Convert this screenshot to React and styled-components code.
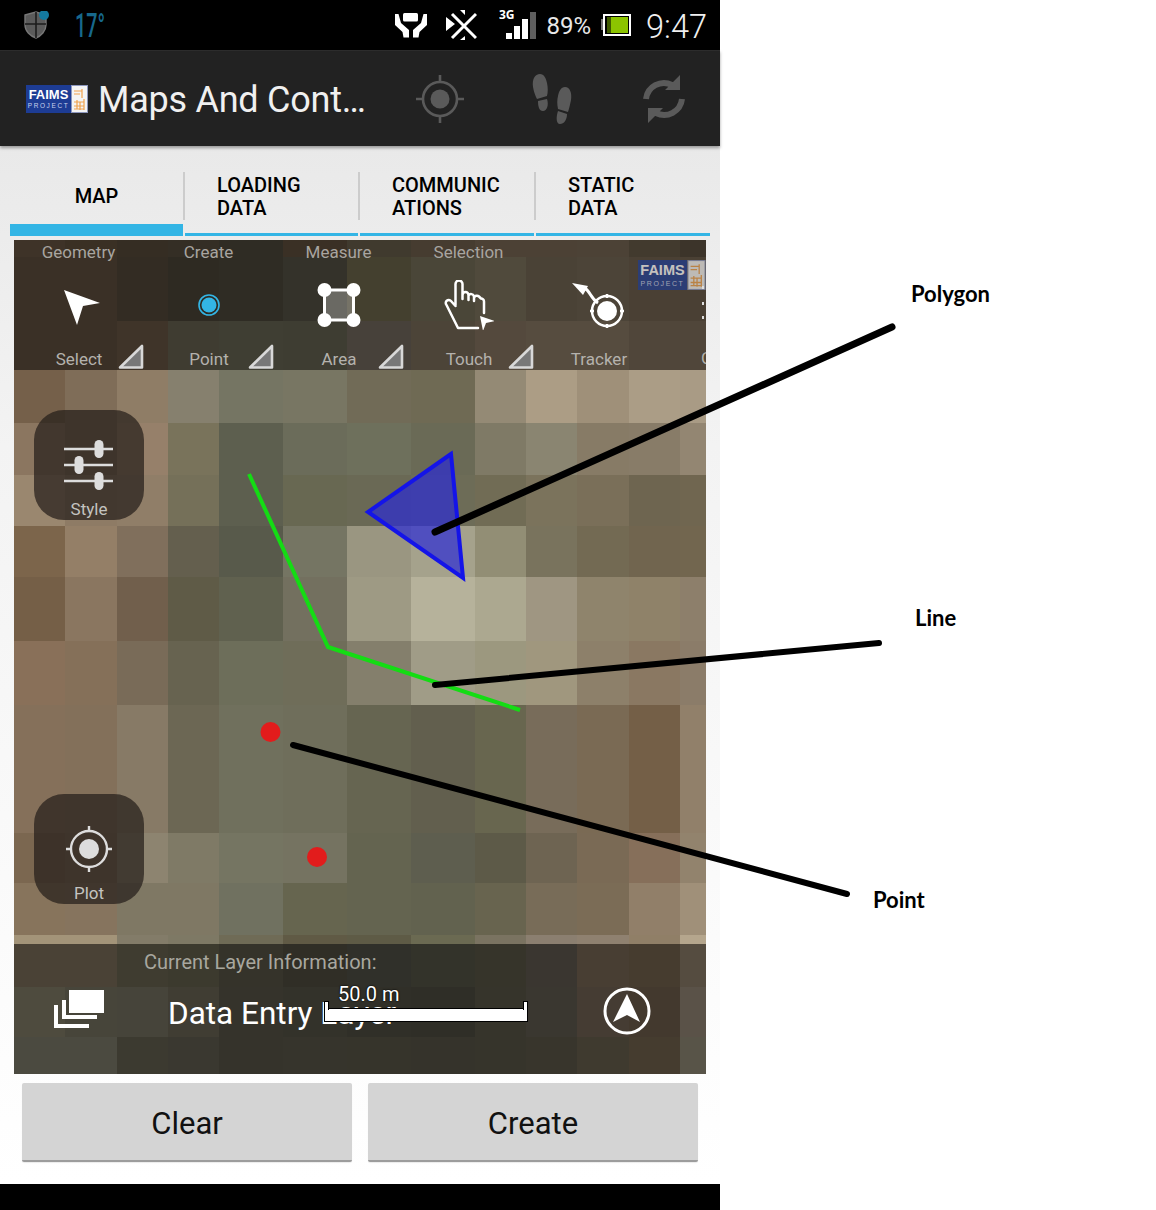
import React from 'react';
import styled, { createGlobalStyle } from 'styled-components';

const Global = createGlobalStyle`
  html, body { margin: 0; padding: 0; background: #fff; }
  #root { width: 1156px; height: 1210px; }
`;

const Page = styled.div`
  position: relative;
  width: 1156px;
  height: 1210px;
  overflow: hidden;
  background: #fff;
  font-family: Roboto, "Liberation Sans", sans-serif;
`;
const Phone = styled.div`
  width: 720px;
  height: 1210px;
  display: flex;
  flex-direction: column;
`;
const StatusBar = styled.div`
  height: 50px;
  flex: none;
  background: #000;
  display: flex;
  align-items: center;
  padding: 0 13px 0 22px;
`;
const Temp = styled.span`
  margin-left: 25px;
  width: 28px;
  font: 500 34px Roboto, sans-serif;
  color: #17688c;
  transform: scaleX(0.58);
  transform-origin: left center;
  white-space: nowrap;
`;
const StatusRight = styled.div`
  margin-left: auto;
  display: flex;
  align-items: center;
`;
const Percent = styled.span`
  font: 400 24px Roboto, sans-serif;
  color: #e8e8e8;
  margin: 2px 10px 0 10px;
`;
const Clock = styled.span`
  font: 300 32.5px Roboto, sans-serif;
  color: #f0f0f0;
  margin: 3px 0 0 14px;
`;
const NetLabel = styled.text`
  font: 700 12px "Open Sans", sans-serif;
  fill: #fff;
`;
const ActionBar = styled.div`
  height: 96px;
  flex: none;
  box-sizing: border-box;
  background: #222;
  border-top: 1px solid #2c2c2c;
  display: flex;
  align-items: center;
  padding-left: 26px;
  box-shadow: 0 2px 3px rgba(0, 0, 0, 0.35);
  position: relative;
  z-index: 1;
`;
const Logo = styled.div`
  display: flex;
  flex: none;
  width: ${p => p.$w}px;
  height: ${p => p.$h}px;
  opacity: ${p => p.$dim ? 0.68 : 1};
`;
const LogoBlue = styled.div`
  flex: 1;
  background: #1d3c94;
  color: #fff;
  display: flex;
  flex-direction: column;
  align-items: center;
  justify-content: center;
  font-weight: 700;
  font-size: ${p => p.$size}px;
  line-height: 1;
  font-family: "Liberation Sans", sans-serif;
`;
const LogoSub = styled.span`
  font-weight: 400;
  font-size: ${p => p.$size}px;
  letter-spacing: 1.6px;
  color: #c8d2ec;
  margin-top: 2px;
`;
const LogoSide = styled.svg`
  flex: none;
  display: block;
`;
const Title = styled.div`
  margin: 2px 0 0 10px;
  width: 316px;
  font-size: 36px;
  letter-spacing: -0.25px;
  color: #f0f0f0;
  white-space: nowrap;
`;
const ActionIcons = styled.div`
  display: flex;
  align-items: center;
`;
const Content = styled.div`
  flex: 1;
  display: flex;
  flex-direction: column;
  background: linear-gradient(#e9e9e9 0, #ececec 90px, #f3f3f3 300px, #ffffff 100%);
`;
const Tabs = styled.div`
  height: 90px;
  flex: none;
  padding: 0 10px;
  display: grid;
  grid-template-columns: 173px 173px 174px 174px;
  column-gap: 2px;
`;
const Tab = styled.div`
  position: relative;
  display: flex;
  align-items: center;
  justify-content: ${p => p.$active ? 'center' : 'flex-start'};
  height: 90px;
  box-sizing: border-box;
  padding-left: ${p => p.$active ? '0' : '32px'};
  padding-top: ${p => p.$active ? '22px' : '17px'};
  padding-bottom: ${p => p.$active ? '0' : '3px'};
  border-bottom: ${p => p.$active ? '12px' : '3px'} solid #33b5e5;
  font-size: 20px;
  font-weight: 500;
  line-height: 23px;
  color: #000;
  &::after {
    content: '';
    display: ${p => p.$last ? 'none' : 'block'};
    position: absolute;
    right: -2px;
    top: 26px;
    height: 48px;
    width: 2px;
    background: #ccc;
  }
`;
const Map = styled.div`
  position: relative;
  width: 692px;
  height: 834px;
  margin: 4px 0 0 14px;
  flex: none;
  display: flex;
  flex-direction: column;
  overflow: hidden;
`;
const Mosaic = styled.div`
  position: absolute;
  inset: 0;
  display: grid;
  grid-template-columns: 51px 52px 51px 51px 64px 64px 64px 64px 51px 51px 52px 51px 26px;
  grid-template-rows: 17px 64px 49px 53px 52px 51px 51px 64px 64px 128px 50px 52px 9px 43px 50px 37px;
`;
const Cell = styled.div`
  background: ${p => p.$c};
`;
const Drawing = styled.svg`
  position: absolute;
  inset: 0;
`;
const TopPanel = styled.div`
  position: relative;
  height: 130px;
  flex: none;
  display: grid;
  grid-template-columns: repeat(5, 130px);
  color: #a8a5a0;
`;
const Tool = styled.div`
  position: relative;
  display: flex;
  flex-direction: column;
  align-items: center;
`;
const ToolHead = styled.div`
  height: 24px;
  line-height: 25px;
  margin-left: -1px;
  font-size: 17px;
`;
const ToolIcon = styled.svg`
  display: block;
  margin-top: 16px;
`;
const ToolName = styled.div`
  margin-top: 18px;
  font-size: 17px;
  line-height: 22px;
  color: #b4b2ad;
`;
const Corner = styled.svg`
  position: absolute;
  right: 0;
  bottom: 0;
`;
const PanelLogo = styled.div`
  position: absolute;
  top: 20px;
  right: 0;
`;
const EdgeMarks = styled.svg`
  position: absolute;
  right: 0;
  top: 40px;
`;
const EdgeLabel = styled.span`
  position: absolute;
  right: -6px;
  bottom: 2px;
  font-size: 17px;
  color: #b4b2ad;
`;
const Middle = styled.div`
  position: relative;
  flex: 1;
  display: flex;
  flex-direction: column;
  justify-content: space-between;
  padding: 40px 0 40px 20px;
`;
const FloatButton = styled.div`
  width: 110px;
  height: 110px;
  border-radius: 30px;
  background: rgba(38, 30, 26, 0.72);
  display: flex;
  flex-direction: column;
  align-items: center;
  color: #c4c4c0;
  font-size: 17px;
`;
const FloatIcon = styled.svg`
  display: block;
  margin-top: ${p => p.$top}px;
`;
const FloatLabel = styled.span`
  margin-top: auto;
  margin-bottom: 1px;
  line-height: 20px;
`;
const BottomPanel = styled.div`
  position: relative;
  height: 130px;
  flex: none;
`;
const LayerCaption = styled.div`
  position: absolute;
  left: 130px;
  top: 5px;
  font-size: 20px;
  line-height: 26px;
  color: #a8a79f;
`;
const LayerRow = styled.div`
  display: flex;
  align-items: flex-start;
  padding: 45px 0 0 40px;
`;
const LayerName = styled.div`
  margin-left: 64px;
  width: 435px;
  font-size: 31.5px;
  line-height: 50px;
  color: #fff;
  white-space: nowrap;
`;
const NorthIcon = styled.svg`
  display: block;
  margin-top: -2px;
`;
const ScaleLabel = styled.div`
  position: absolute;
  left: 324px;
  top: 37px;
  font-size: 20px;
  line-height: 26px;
  color: #fff;
  text-shadow: 0 0 2px #000, 0 0 1px #000;
`;
const ScaleBar = styled.div`
  position: absolute;
  left: 310px;
  top: 64px;
  width: 204px;
  height: 14px;
  box-sizing: border-box;
  background: #fff;
  border: 1px solid #000;
  &::before, &::after {
    content: '';
    position: absolute;
    bottom: 11px;
    width: 5px;
    height: 9px;
    box-sizing: border-box;
    background: #fff;
    border: 1px solid #000;
    border-bottom: none;
  }
  &::before { left: -1px; }
  &::after { right: -1px; }
`;
const Buttons = styled.div`
  display: flex;
  gap: 16px;
  padding: 9px 22px 0;
`;
const Button = styled.div`
  width: 330px;
  height: 79px;
  box-sizing: border-box;
  padding-top: 4px;
  background: #d4d4d4;
  border-bottom: 2px solid #9c9c9c;
  border-radius: 2px;
  box-shadow: 0 1px 1px rgba(0, 0, 0, 0.08);
  display: flex;
  align-items: center;
  justify-content: center;
  font-size: 31px;
  color: #111;
`;
const NavBar = styled.div`
  height: 26px;
  flex: none;
  background: #000;
`;
const Annotations = styled.svg`
  position: absolute;
  inset: 0;
`;
const Note = styled.div`
  position: absolute;
  left: ${p => p.$x}px;
  top: ${p => p.$y}px;
  font: 700 22px Lato, "Open Sans", sans-serif;
  line-height: 26px;
  color: #000;
`;

const MOSAIC = [
  '#3e3328 #3a3024 #352d23 #342e25 #2f2c24 #3a3025 #403a2e #463c30 #4c4135 #4c4135 #4c4236 #423a2e #3c342a',
  '#3a3026 #3a3026 #332c23 #2e2a22 #2f2c24 #34322a #44402f #4a4638 #504a3c #4a4236 #4c4438 #4a4034 #4a4034',
  '#3a3026 #3a3026 #3f3429 #3f3c31 #3f3e33 #3e3d32 #47413a #4c4438 #54493d #564c3f #564c3f #50463a #50463a',
  '#75604a #7f6d58 #8f7d66 #86806e #757563 #787663 #716b57 #6f6a54 #948a75 #ac9d85 #9f9079 #ab9d86 #a99b85',
  '#8b7660 #7f6c57 #96806a #79735b #5d5f4f #6b6c5a #6e705c #6a6a56 #7f7a66 #8a8571 #877b66 #887c68 #938672',
  '#9a876f #8e7b65 #907e68 #757059 #5d5f4f #686852 #6a6955 #6d6c57 #716c55 #7b735c #7a6f59 #6e6550 #706650',
  '#7c654b #947f67 #806f5c #645f4e #585a4b #757563 #9a9681 #a5a28c #928e75 #79735d #736a53 #71654f #72664f',
  '#755f47 #8a7660 #715f4c #5f5b47 #60614f #73705f #9e9a84 #b6b29b #aca890 #9f9682 #8f846c #8f8269 #8d7f6b',
  '#897059 #857059 #796b58 #676350 #6d6e5a #6f6d59 #847f6c #a09c87 #9c987f #a0977e #8d806a #8a7862 #8b7c69',
  '#85705a #83705a #877a66 #6c6754 #70705d #6f6e5b #666551 #625f4e #68664f #786c5a #7a6a54 #745f47 #91806a',
  '#7b6750 #7e6c58 #8d8470 #7f7a66 #757562 #757361 #646450 #5e5e4f #5d5a48 #6e6452 #7a6a55 #866f5a #92836d',
  '#87745c #86745e #7f7864 #7f7864 #707160 #66654f #646450 #62624f #68644f #786c58 #7b6c56 #917f69 #a09079',
  '#a39479 #a39479 #837c69 #7e7965 #6f6b56 #605a45 #5e5b46 #6b6a52 #7a7361 #8b7f70 #8f8170 #907f67 #b5a68d',
  '#4a4236 #4a4236 #3f3c30 #3c3a2e #35332a #302e26 #30302a #33332a #36342a #3a3630 #483e33 #463c2f #554c40',
  '#4e4b3e #47453a #46443a #403d33 #35332b #33322a #302f28 #2f2e27 #36342b #3a3730 #453c33 #43392e #5a5248',
  '#4b4a40 #4b4a40 #3c3a30 #3a3830 #35332b #36342c #36342b #35332b #36342b #38352c #3f3a2f #453c2f #585448',
].map(r => r.split(' '));

const TABS = [
  { id: 'map', text: ['MAP'], active: true },
  { id: 'load', text: ['LOADING', 'DATA'] },
  { id: 'comm', text: ['COMMUNIC', 'ATIONS'] },
  { id: 'static', text: ['STATIC', 'DATA'], last: true },
];

const CornerMark = () => (
  <Corner width="26" height="26" viewBox="0 0 26 26">
    <path d="M2 23.5 L24 2 V23.5 Z" fill="#787878" stroke="#d8d8d8" strokeWidth="2.6" strokeLinejoin="round" />
  </Corner>
);

const PageIcon = ({ box, children }) => {
  const [, , w, h] = box.split(' ');
  return <ToolIcon width={w} height={h} viewBox={box}>{children}</ToolIcon>;
};

const LogoMark = ({ w, h, side, big, small, dim }) => (
  <Logo $w={w} $h={h} $dim={dim}>
    <LogoBlue $size={big}>
      FAIMS
      <LogoSub $size={small}>PROJECT</LogoSub>
    </LogoBlue>
    <LogoSide width={side} height={h} viewBox="0 0 17 28">
      <rect x="0.5" y="0.5" width="16" height="27" fill="#f4f4f4" stroke="#8d97bd" />
      <path d="M3 6h8M3 9h6M11 4v9M3 17h10M6 15v9M9 17v8M13 14v11M3 21h10M3 24h10" stroke="#f0a24e" strokeWidth="1.2" fill="none" />
    </LogoSide>
  </Logo>
);

export default function App() {
  return (
    <Page>
      <Global />
      <Phone>
        <StatusBar>
          <svg width="28" height="28" viewBox="22 11 28 28">
            <path d="M25 15 L36 12 L46 15 V25 C46 31 41 36 36 38 C30 36 25 31 25 25 Z" fill="#5b5b5b" stroke="#777" strokeWidth="1.4" />
            <path d="M36 12 V38 M25 24 H46" stroke="#1c1c1c" strokeWidth="1.6" />
            <circle cx="44" cy="15" r="5" fill="#14799f" />
          </svg>
          <Temp>17°</Temp>
          <StatusRight>
            <svg width="36" height="30" viewBox="395 11 36 30">
              <rect x="405" y="14" width="15" height="8.5" rx="1.5" fill="#fff" />
              <path d="M397 15 H400.5 L403 24 L411 31 V38.5 H405.5 L404.5 33 L397 26 Z" fill="#fff" />
              <path d="M429 15 H425.5 L423 24 L415 31 V38.5 H420.5 L421.5 33 L429 26 Z" fill="#fff" />
            </svg>
            <svg width="32" height="32" viewBox="446 9 32 32" style={{ marginLeft: 16 }}>
              <path d="M453 14 L477 38 M477 14 L453 38" stroke="#fff" strokeWidth="3" />
              <path d="M447 17 L456 24 L447 31 Z M461 10 L466 10 L466 15 Z M461 40 L466 40 L466 36 Z" fill="#fff" />
            </svg>
            <svg width="38" height="34" viewBox="500 8 38 34" style={{ marginLeft: 22 }}>
              <NetLabel x="500" y="19">3G</NetLabel>
              <rect x="507" y="33" width="6" height="6" fill="#fff" />
              <rect x="515" y="26" width="6" height="13" fill="#fff" />
              <rect x="523" y="19" width="6" height="20" fill="#fff" />
              <rect x="531" y="12" width="6" height="27" fill="#5e5e5e" />
            </svg>
            <Percent>89%</Percent>
            <svg width="31" height="24" viewBox="602 14 31 24">
              <rect x="602" y="20" width="2" height="11" fill="#777" />
              <rect x="605" y="16" width="26" height="20" fill="#000" stroke="#fff" strokeWidth="2" />
              <rect x="608" y="18" width="21" height="16" fill="#8cc400" />
              <rect x="608" y="18" width="4" height="16" fill="#3f5a00" />
            </svg>
            <Clock>9:47</Clock>
          </StatusRight>
        </StatusBar>

        <ActionBar>
          <LogoMark w={62} h={28} side={17} big={13} small={6.5} />
          <Title>Maps And Cont…</Title>
          <ActionIcons>
            <svg width="52" height="52" viewBox="414 72 52 52">
              <circle cx="440" cy="98" r="17" fill="none" stroke="#5a5a5a" strokeWidth="2.6" />
              <circle cx="440" cy="98" r="9.5" fill="#5a5a5a" />
              <path d="M440 74v7M440 115v7M416 98h7M457 98h7" stroke="#5a5a5a" strokeWidth="2.6" />
            </svg>
            <svg width="44" height="56" viewBox="530 70 44 56" style={{ marginLeft: 64 }}>
              <path d="M540 73 C535 73 532 78 533 86 C534 92 536 96 537 98 L547 95 C548 91 548 87 547 82 C546 77 544 73 540 73 Z M538 100 L547 98 C549 104 547 110 543 110 C539 110 538 105 538 100 Z" fill="#5a5a5a" />
              <path d="M565 86 C570 86 572 92 571 99 C570 104 569 108 568 111 L558 108 C557 103 557 99 558 95 C559 90 561 86 565 86 Z M558 110 L567 113 C567 119 564 123 560 123 C556 123 556 116 558 110 Z" fill="#5a5a5a" />
            </svg>
            <svg width="50" height="52" viewBox="639 72 50 52" style={{ marginLeft: 65 }}>
              <path d="M646 98 A18 18 0 0 1 672 84 M682 98 A18 18 0 0 1 656 112" fill="none" stroke="#5a5a5a" strokeWidth="6" />
              <path d="M680 74 V89 H665 Z M648 122 V107 H663 Z" fill="#5a5a5a" />
            </svg>
          </ActionIcons>
        </ActionBar>

        <Content>
          <Tabs>
            {TABS.map(t => (
              <Tab key={t.id} $active={t.active} $last={t.last}>
                <div>{t.text.map(l => <div key={l}>{l}</div>)}</div>
              </Tab>
            ))}
          </Tabs>

          <Map>
            <Mosaic>
              {MOSAIC.flatMap((row, r) => row.map((c, i) => <Cell key={`${r}-${i}`} $c={c} />))}
            </Mosaic>
            <Drawing width="692" height="834" viewBox="14 240 692 834">
              <polygon points="451,454 368,512 463,578" fill="rgba(40,40,215,0.68)" stroke="#1414e8" strokeWidth="4" />
              <polyline points="249,474 328,647 520,710" fill="none" stroke="#14dc14" strokeWidth="4" />
              <circle cx="270.5" cy="732" r="10" fill="#e21c1c" />
              <circle cx="317" cy="857" r="10" fill="#e21c1c" />
            </Drawing>

            <TopPanel>
              <Tool>
                <ToolHead>Geometry</ToolHead>
                <PageIcon box="54 280 50 50">
                  <polygon points="64,290 100,303 83,306 77,325" fill="#fff" />
                </PageIcon>
                <ToolName>Select</ToolName>
                <CornerMark />
              </Tool>
              <Tool>
                <ToolHead>Create</ToolHead>
                <PageIcon box="184 280 50 50">
                  <circle cx="209" cy="305" r="10" fill="none" stroke="#33b5e5" strokeWidth="1.6" />
                  <circle cx="209" cy="305" r="7.5" fill="#33b5e5" />
                </PageIcon>
                <ToolName>Point</ToolName>
                <CornerMark />
              </Tool>
              <Tool>
                <ToolHead>Measure</ToolHead>
                <PageIcon box="314 280 50 50">
                  <rect x="324.5" y="290" width="29" height="30" fill="rgba(255,255,255,0.27)" stroke="#fff" strokeWidth="3" />
                  <circle cx="324.5" cy="290" r="7" fill="#fff" />
                  <circle cx="353.5" cy="290" r="7" fill="#fff" />
                  <circle cx="324.5" cy="320" r="7" fill="#fff" />
                  <circle cx="353.5" cy="320" r="7" fill="#fff" />
                </PageIcon>
                <ToolName>Area</ToolName>
                <CornerMark />
              </Tool>
              <Tool>
                <ToolHead>Selection</ToolHead>
                <PageIcon box="444 280 50 50">
                  <path d="M455.5 305 V284 a3.5 3.5 0 0 1 7 0 V299 M462.5 295 a3 3 0 0 1 6 0 V300 M468.5 295.5 a3 3 0 0 1 5.5 1 V301 M474 298 a3 3 0 0 1 5 -1.5 l2 2 a3 3 0 0 1 3 3 V313 M455.5 306 L451 301 a3 3 0 0 0 -4.5 4 L458 328 H478" fill="none" stroke="#fff" strokeWidth="2.5" strokeLinecap="round" strokeLinejoin="round" />
                  <polygon points="480,316 495,321 486,323 483,331" fill="#fff" />
                </PageIcon>
                <ToolName>Touch</ToolName>
                <CornerMark />
              </Tool>
              <Tool>
                <ToolHead />
                <PageIcon box="569 280 60 50">
                  <polygon points="572,283 588,286 583,295" fill="#fff" />
                  <path d="M584 288 C590 290 590 298 598 303" fill="none" stroke="#fff" strokeWidth="3" />
                  <circle cx="607" cy="311" r="10" fill="#fff" />
                  <circle cx="607" cy="311" r="15" fill="none" stroke="#fff" strokeWidth="2.5" />
                  <path d="M607 294v4M607 324v4M590 311h4M620 311h4" stroke="#fff" strokeWidth="2.5" />
                </PageIcon>
                <ToolName>Tracker</ToolName>
              </Tool>
              <PanelLogo>
                <LogoMark w={68} h={30} side={19} big={14.5} small={7} dim />
              </PanelLogo>
              <EdgeMarks width="4" height="44" viewBox="0 0 4 44">
                <rect x="0" y="6" width="2" height="3" fill="#ddd" />
                <rect x="0" y="22" width="2" height="3" fill="#ddd" />
                <rect x="0" y="36" width="2" height="3" fill="#ddd" />
              </EdgeMarks>
              <EdgeLabel>C</EdgeLabel>
            </TopPanel>

            <Middle>
              <FloatButton>
                <FloatIcon $top={28} width="52" height="56" viewBox="63 438 52 56">
                  <path d="M64 449h49M64 465h49M64 481h49" stroke="#ddd" strokeWidth="2.6" />
                  <rect x="94.5" y="440" width="9" height="18" rx="4.5" fill="#ddd" />
                  <rect x="74.5" y="456" width="9" height="18" rx="4.5" fill="#ddd" />
                  <rect x="94.5" y="472" width="9" height="18" rx="4.5" fill="#ddd" />
                </FloatIcon>
                <FloatLabel>Style</FloatLabel>
              </FloatButton>
              <FloatButton>
                <FloatIcon $top={31} width="48" height="48" viewBox="65 825 48 48">
                  <circle cx="89" cy="849" r="18" fill="none" stroke="#ddd" strokeWidth="2.4" />
                  <circle cx="89" cy="849" r="10" fill="#ddd" />
                  <path d="M89 826v6M89 866v6M66 849h6M106 849h6" stroke="#ddd" strokeWidth="2.4" />
                </FloatIcon>
                <FloatLabel>Plot</FloatLabel>
              </FloatButton>
            </Middle>

            <BottomPanel>
              <LayerCaption>Current Layer Information:</LayerCaption>
              <LayerRow>
                <svg width="50" height="40" viewBox="54 989 50 40">
                  <rect x="69" y="990" width="35" height="23" fill="#fff" />
                  <path d="M64 1000 V1017 H97" fill="none" stroke="#fff" strokeWidth="4" />
                  <path d="M56 1005 V1026 H89" fill="none" stroke="#fff" strokeWidth="4" />
                </svg>
                <LayerName>Data Entry Layer</LayerName>
                <NorthIcon width="48" height="48" viewBox="603 987 48 48">
                  <circle cx="627" cy="1011" r="22" fill="none" stroke="#fff" strokeWidth="3" />
                  <polygon points="627,994 640,1022 627,1015 613,1022" fill="#fff" />
                </NorthIcon>
              </LayerRow>
              <ScaleBar />
              <ScaleLabel>50.0 m</ScaleLabel>
            </BottomPanel>
          </Map>

          <Buttons>
            <Button>Clear</Button>
            <Button>Create</Button>
          </Buttons>
        </Content>
        <NavBar />
      </Phone>

      <Annotations width="1156" height="1210" viewBox="0 0 1156 1210">
        <g stroke="#000" strokeLinecap="round" fill="none">
          <line x1="435" y1="532" x2="892" y2="327" strokeWidth="7" />
          <line x1="435" y1="685" x2="879" y2="643" strokeWidth="6" />
          <line x1="293" y1="745" x2="847" y2="894" strokeWidth="6" />
        </g>
      </Annotations>
      <Note $x={911} $y={281}>Polygon</Note>
      <Note $x={915} $y={605}>Line</Note>
      <Note $x={873} $y={887}>Point</Note>
    </Page>
  );
}
